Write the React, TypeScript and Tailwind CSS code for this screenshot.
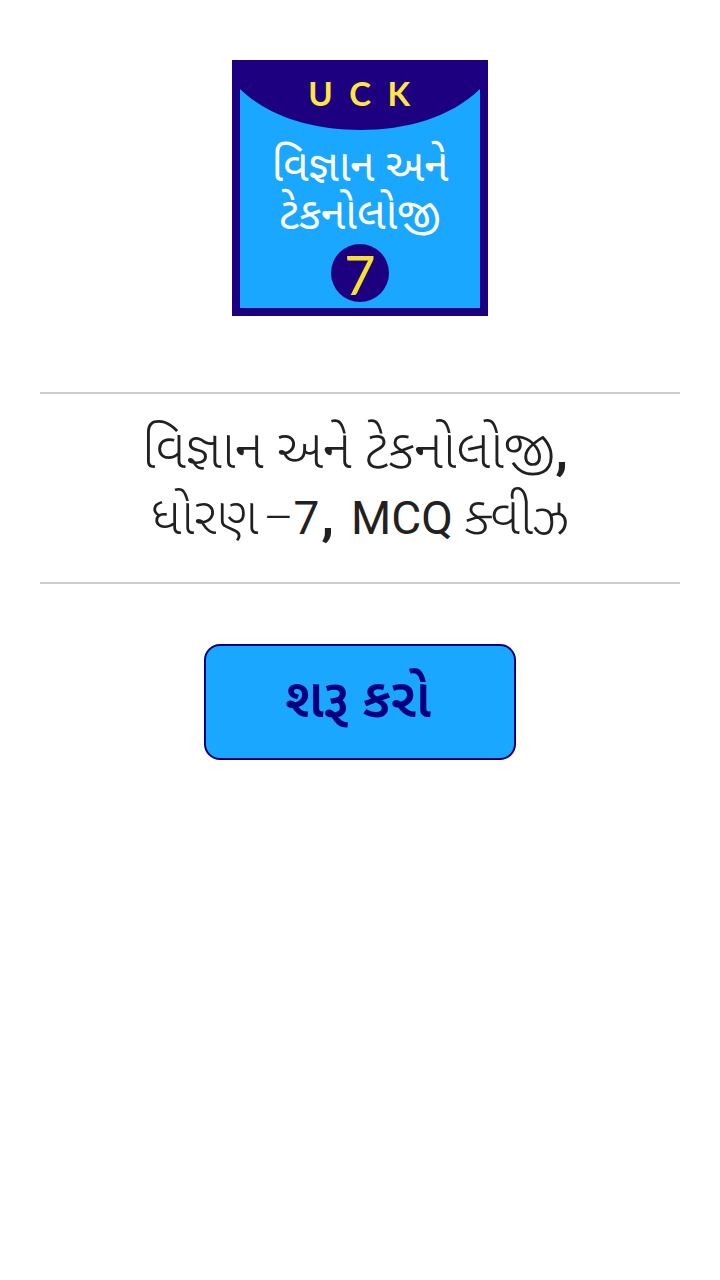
import React from "react";

const GUJ = "font-['Roboto','Noto_Sans','Noto_Sans_Gujarati',sans-serif]";

function Logo() {
  return (
    <div className="relative w-64 h-64 bg-[#1c0080] p-2">
      <div className="relative w-full h-full bg-[#1aa7ff] overflow-hidden">
        <svg className="absolute left-0 top-0" width="240" height="62" viewBox="0 0 240 62">
          <path d="M0 0H240V21C210 50 165 62 120 62C75 62 30 50 0 21Z" fill="#1c0080" />
        </svg>
        <div className="relative flex flex-col items-center">
          <div className="mt-[6px] h-[38px] text-[33px] leading-[38px] font-bold tracking-[0.5em] pl-[0.45em] text-[#ffe740] font-['Lato',sans-serif]">
            UCK
          </div>
          <div className={`mt-[30px] text-white text-[44px] leading-[48px] text-center whitespace-nowrap ${GUJ}`}>
            <div>વિજ્ઞાન અને</div>
            <div>ટેકનોલોજી</div>
          </div>
          <div className="mt-[6px] w-[58px] h-[58px] rounded-full bg-[#1c0080] flex items-center justify-center text-[#f7e02f] text-[54px] leading-none pt-[3px] font-['Lato',sans-serif]">
            7
          </div>
        </div>
      </div>
    </div>
  );
}

export default function App() {
  return (
    <div className="min-h-[1280px] bg-white flex flex-col items-center pt-[60px] px-10">
      <Logo />
      <div className={`mt-[76px] w-full border-y-2 border-[#cccccc] h-[192px] pb-[8px] flex flex-col items-center justify-center text-[#212121] text-[46px] leading-[64px] text-center ${GUJ}`}>
        <div className="whitespace-nowrap pr-[10px]">
          <span className="text-[54px] font-light">વિજ્ઞાન અને ટેકનોલોજી</span>
          <span className="text-[52px] font-bold">,</span>
        </div>
        <div className="whitespace-nowrap">
          <span className="text-[52px] font-light">ધોરણ</span>
          <span className="font-light ml-[5px]">–</span>7<span className="text-[52px] font-bold ml-[2px]">,</span>
          <span className="ml-[17px]">MCQ</span>{" "}
          <span className="text-[53px] font-light">ક્વીઝ</span>
        </div>
      </div>
      <button className={`mt-[60px] w-[312px] h-[116px] pb-[8px] pr-[4px] rounded-[16px] border-2 border-[#00007f] bg-[#1aa7ff] text-[#00007f] text-[54px] font-semibold ${GUJ}`}>
        શરૂ કરો
      </button>
    </div>
  );
}
